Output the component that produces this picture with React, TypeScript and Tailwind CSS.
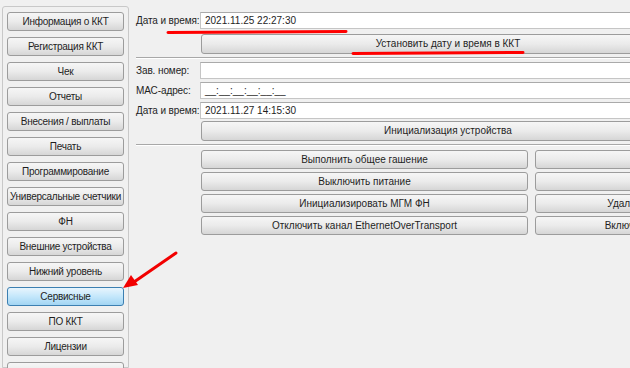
import React from "react";

const font = { fontFamily: '"Liberation Sans", Arial, sans-serif' };

const navItems = [
  "Информация о ККТ",
  "Регистрация ККТ",
  "Чек",
  "Отчеты",
  "Внесения / выплаты",
  "Печать",
  "Программирование",
  "Универсальные счетчики",
  "ФН",
  "Внешние устройства",
  "Нижний уровень",
  "Сервисные",
  "ПО ККТ",
  "Лицензии",
  "",
];

const btn =
  "flex shrink-0 items-center justify-center overflow-hidden whitespace-nowrap rounded-[3px] border border-[#9c9c9c] bg-gradient-to-b from-[#f6f6f6] via-[#ebebeb] to-[#d6d6d6] text-[10px] leading-none text-[#1e1e1e]";
const btnActive =
  "flex shrink-0 items-center justify-center overflow-hidden whitespace-nowrap rounded-[3px] border border-[#3c7fb1] bg-gradient-to-b from-[#e8f5fd] via-[#c4e7fb] to-[#a2d5f3] text-[10px] leading-none text-[#1e1e1e]";

const Field = ({ label, value }: { label: string; value: string }) => (
  <div className="flex h-[17px] items-center">
    <span className="w-[64px] shrink-0 whitespace-nowrap text-[10px] tracking-[-0.1px] text-[#1e1e1e]">{label}</span>
    <div className="flex h-full w-[500px] shrink-0 items-center border border-[#c5c5c5] border-t-[#aaaaaa] bg-white pl-[4px] text-[10px] text-[#1e1e1e]">
      {value}
    </div>
  </div>
);

const Sep = () => <div className="h-px w-[600px] bg-[#a8a8a8] shadow-[0_1px_0_#ffffff]" />;

export default function App() {
  return (
    <div
      style={font}
      className="relative flex h-[368px] w-[630px] overflow-hidden bg-[#f0f0f0]"
    >
      <aside className="ml-[2px] mt-[6px] flex w-[127px] shrink-0 flex-col gap-[6px] rounded-t-[3px] border border-[#c8c8c8] px-[4px] pt-[5px]">
        {navItems.map((item) => (
          <div
            key={item || "empty"}
            className={`${item === "Сервисные" ? btnActive : btn} h-[19px] w-[117px] tracking-[-0.25px]`}
          >
            {item}
          </div>
        ))}
      </aside>

      <main className="ml-[7px] flex min-w-0 flex-1 flex-col pt-[12px]">
        <Field label="Дата и время:" value="2021.11.25 22:27:30" />
        <div className={`${btn} ml-[65px] mt-[5px] h-[20px] w-[494px]`}>
          Установить дату и время в ККТ
        </div>
        <div className="mt-[3px]">
          <Sep />
        </div>

        <div className="mt-[4px] flex flex-col gap-[3px]">
          <Field label="Зав. номер:" value="" />
          <Field label="МАС-адрес:" value="__:__:__:__:__:__" />
          <Field label="Дата и время:" value="2021.11.27 14:15:30" />
        </div>
        <div className={`${btn} ml-[65px] mt-[2px] h-[20px] w-[494px]`}>
          Инициализация устройства
        </div>
        <div className="mt-[3px]">
          <Sep />
        </div>

        <div className="ml-[65px] mt-[5px] grid w-[560px] grid-cols-[327px_214px] gap-x-[7px] gap-y-[3px]">
          <div className={`${btn} h-[19px]`}>Выполнить общее гашение</div>
          <div className={`${btn} h-[19px]`}></div>
          <div className={`${btn} h-[19px]`}>Выключить питание</div>
          <div className={`${btn} h-[19px]`}></div>
          <div className={`${btn} h-[19px]`}>Инициализировать МГМ ФН</div>
          <div className={`${btn} h-[19px]`}>Удалить ключи</div>
          <div className={`${btn} h-[19px]`}>Отключить канал EthernetOverTransport</div>
          <div className={`${btn} h-[19px]`}>Включить канал</div>
        </div>
      </main>

      <svg
        className="pointer-events-none absolute left-0 top-0"
        width="630"
        height="368"
        viewBox="0 0 630 368"
      >
        <path d="M168 32.5 L346 31.5" stroke="#ff0000" strokeWidth="3" strokeLinecap="round" />
        <path d="M353 53.5 L523 52.5" stroke="#ff0000" strokeWidth="3" strokeLinecap="round" />
        <path d="M176 253 L134 282" stroke="#f20000" strokeWidth="3" strokeLinecap="round" />
        <path d="M123 288 L131 275 L138 285 Z" fill="#f20000" />
      </svg>
    </div>
  );
}
